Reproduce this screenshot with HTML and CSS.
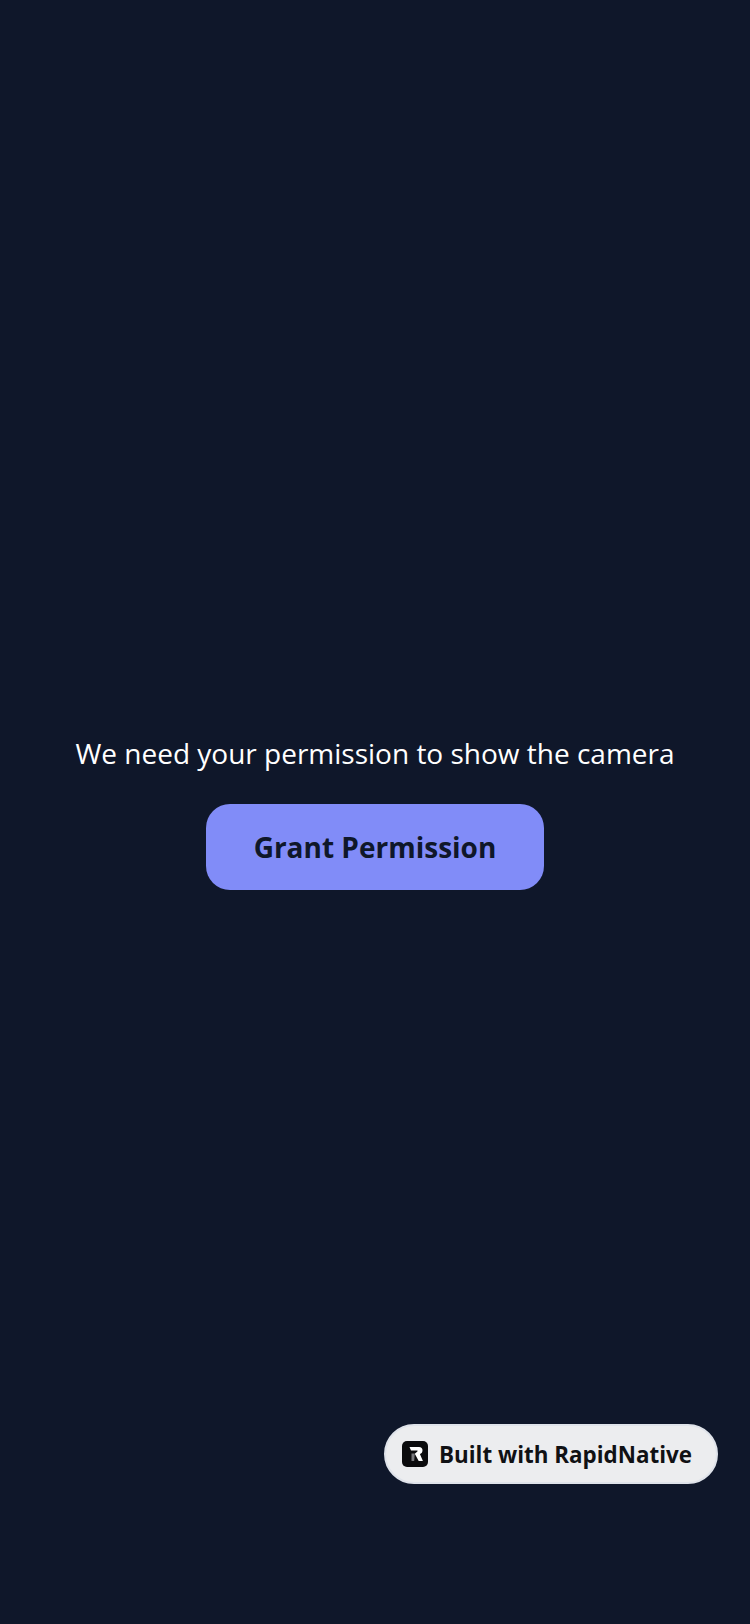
FILE: index.html
```html
<!DOCTYPE html>
<html lang="en">
<head>
  <meta charset="UTF-8">
  <meta name="viewport" content="width=device-width, initial-scale=1.0">
  <title>Camera</title>
  <link rel="stylesheet" href="styles.css">
</head>
<body>
  <main class="permission">
    <p class="message">We need your permission to show the camera</p>
    <button class="btn">Grant Permission</button>
  </main>

  <a class="badge">
    <svg class="badge-logo" viewBox="0 0 26 26" aria-hidden="true">
      <rect width="26" height="26" rx="5" fill="#0b0b0d"/>
      <path d="M7.500 6h9.500c2.300 0 3.500 1.300 3.500 3.300 0 1.900-.9 3.200-2.600 3.800l3 6.900h-4.200l-3.900-7.300 2.600-2.300c.3-.4.200-.8-.4-.8h-6z" fill="#fff"/>
      <path d="M9.500 12.500h3.300l-.6 7.500H9.500z" fill="#77777b"/>
    </svg>
    <span>Built with RapidNative</span>
  </a>
</body>
</html>
```

FILE: styles.css
```css
* {
  box-sizing: border-box;
}

html, body {
  height: 100%;
}

body {
  margin: 0;
  background-color: #0f172a;
  font-family: 'Open Sans', 'Noto Sans', sans-serif;
}

.permission {
  height: 100%;
  display: flex;
  flex-direction: column;
  align-items: center;
  justify-content: center;
}

.message {
  margin: 0 0 32px;
  font-size: 28px;
  line-height: 38px;
  color: #ffffff;
}

.btn {
  width: 338px;
  height: 86px;
  padding: 0;
  background-color: #818cf8;
  color: #0f172a;
  border: none;
  border-radius: 24px;
  font-family: inherit;
  font-size: 28px;
  font-weight: 700;
}

.badge {
  position: absolute;
  right: 32px;
  bottom: 140px;
  width: 334px;
  height: 60px;
  display: flex;
  align-items: center;
  gap: 11px;
  padding-left: 16px;
  background-color: #ecedef;
  border: 2px solid #dfe3ea;
  border-radius: 30px;
  color: #101114;
  font-size: 22.4px;
  font-weight: 700;
}

.badge-logo {
  width: 26px;
  height: 26px;
  flex-shrink: 0;
}
```
